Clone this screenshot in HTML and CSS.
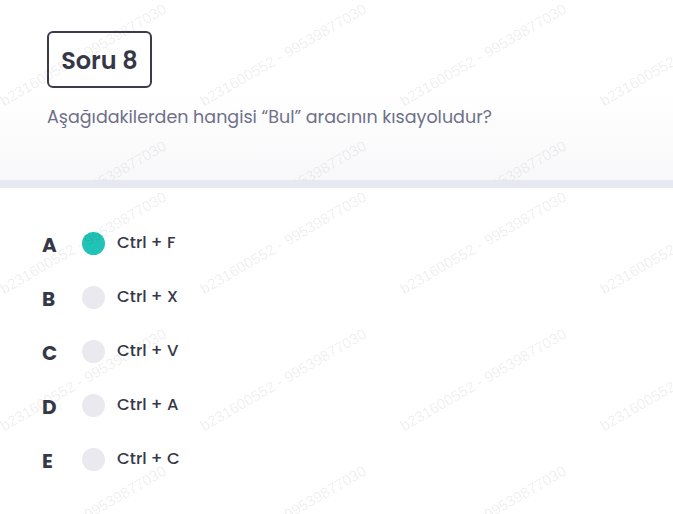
FILE: index.html
```html
<!DOCTYPE html>
<html lang="tr">
<head>
<meta charset="utf-8">
<title>Soru 8</title>
<link rel="stylesheet" href="styles.css">
</head>
<body>
<section class="question">
  <div class="q-inner">
    <div class="q-badge">Soru 8</div>
    <p class="q-text">Aşağıdakilerden hangisi “Bul” aracının kısayoludur?</p>
  </div>
  <div class="watermark" aria-hidden="true">
    <span>b231600552 - 99539877030</span><span>b231600552 - 99539877030</span><span>b231600552 - 99539877030</span><span>b231600552 - 99539877030</span>
    <span>b231600552 - 99539877030</span><span>b231600552 - 99539877030</span><span>b231600552 - 99539877030</span><span>b231600552 - 99539877030</span>
  </div>
</section>
<div class="divider"></div>
<section class="answers">
  <ul class="options">
    <li class="option"><span class="opt-letter">A</span><span class="radio selected"></span><span class="opt-text">Ctrl + F</span></li>
    <li class="option"><span class="opt-letter">B</span><span class="radio"></span><span class="opt-text">Ctrl + X</span></li>
    <li class="option"><span class="opt-letter">C</span><span class="radio"></span><span class="opt-text">Ctrl + V</span></li>
    <li class="option"><span class="opt-letter">D</span><span class="radio"></span><span class="opt-text">Ctrl + A</span></li>
    <li class="option"><span class="opt-letter">E</span><span class="radio"></span><span class="opt-text">Ctrl + C</span></li>
  </ul>
  <div class="watermark" aria-hidden="true">
    <span>b231600552 - 99539877030</span><span>b231600552 - 99539877030</span><span>b231600552 - 99539877030</span><span>b231600552 - 99539877030</span>
    <span>b231600552 - 99539877030</span><span>b231600552 - 99539877030</span><span>b231600552 - 99539877030</span><span>b231600552 - 99539877030</span>
    <span>b231600552 - 99539877030</span><span>b231600552 - 99539877030</span><span>b231600552 - 99539877030</span><span>b231600552 - 99539877030</span>
  </div>
</section>
</body>
</html>
```
FILE: styles.css
```css
* { box-sizing: border-box; }
html, body { margin: 0; padding: 0; }
body {
  background: #fff;
  font-family: "Poppins", "DejaVu Sans", sans-serif;
  color: #363848;
  width: 673px;
  height: 514px;
  overflow: hidden;
}
.question {
  position: relative;
  height: 180px;
  overflow: hidden;
  background: linear-gradient(to bottom, #ffffff 50%, #f8f8fa 100%);
}
.q-inner {
  padding: 31px 0 0 47px;
  display: flex;
  flex-direction: column;
  align-items: flex-start;
}
.q-badge {
  width: 105px;
  height: 57px;
  border: 2px solid #3a3c4c;
  border-radius: 6px;
  display: flex;
  align-items: center;
  justify-content: center;
  font-size: 24px;
  font-weight: 600;
  color: #363848;
  padding-top: 2px;
}
.q-text {
  margin: 17px 0 0;
  font-size: 17.5px;
  line-height: 24px;
  color: #6e7089;
}
.divider {
  height: 8px;
  background: #e8e8f0;
}
.answers {
  position: relative;
  height: 326px;
  overflow: hidden;
}
.options {
  list-style: none;
  margin: 0;
  padding: 28px 0 0 42px;
}
.option {
  height: 54px;
  display: flex;
  align-items: center;
}
.opt-letter {
  width: 40px;
  font-size: 20px;
  font-weight: 700;
  color: #363848;
  padding-top: 4px;
}
.radio {
  width: 23px;
  height: 23px;
  border-radius: 50%;
  background: #e9e9ef;
  flex: none;
}
.radio.selected { background: #20c3b5; }
.opt-text {
  margin-left: 12px;
  font-size: 16.5px;
  font-weight: 500;
  color: #363848;
  padding-bottom: 2px;
}
.watermark {
  position: absolute;
  left: -17px;
  top: -14px;
  display: grid;
  grid-template-columns: repeat(4, 200px);
  grid-auto-rows: 137px;
  pointer-events: none;
}
.watermark span {
  display: flex;
  align-items: center;
  justify-content: center;
  white-space: nowrap;
  font-family: "Liberation Sans", Arial, sans-serif;
  font-size: 15px;
  color: rgba(0, 0, 0, 0.08);
  transform: rotate(-30deg);
}
```
